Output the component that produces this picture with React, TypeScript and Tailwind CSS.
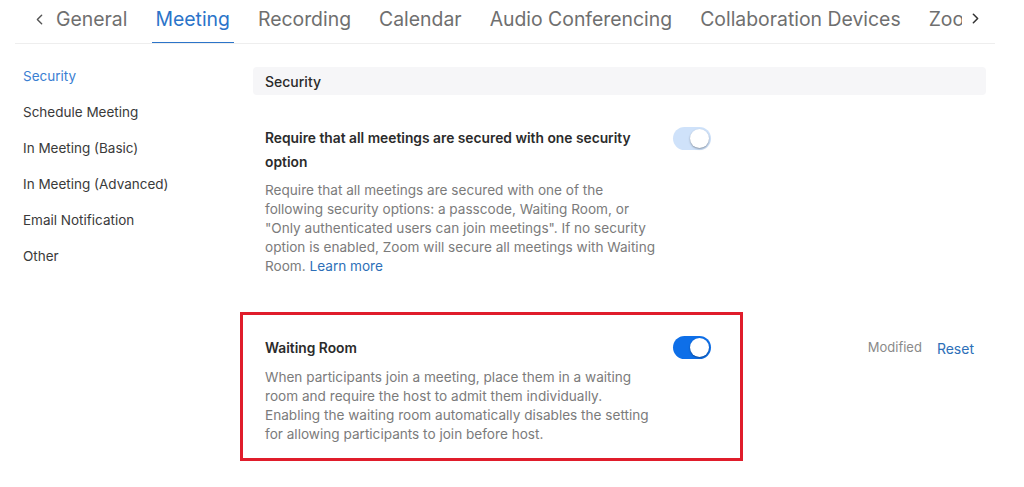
import { ChevronLeft, ChevronRight } from 'lucide-react';

const tabs = ['General', 'Meeting', 'Recording', 'Calendar', 'Audio Conferencing', 'Collaboration Devices', 'Zoom Apps'];
const sideItems = ['Security', 'Schedule Meeting', 'In Meeting (Basic)', 'In Meeting (Advanced)', 'Email Notification', 'Other'];

const Toggle = ({ on, dim }: { on: boolean; dim?: boolean }) => (
  <div
    className={`relative h-[23px] w-[38px] shrink-0 rounded-full ${dim ? 'bg-[#cfe2fa]' : on ? 'bg-[#0e6fe8]' : 'bg-gray-300'}`}
  >
    <div
      className={`absolute top-[2px] h-[19px] w-[19px] rounded-full bg-white shadow-[0_1px_2px_rgba(0,0,0,0.35)] ${on ? 'right-[2px]' : 'left-[2px]'}`}
    />
  </div>
);

const App = () => {
  return (
    <div className="h-[487px] w-[1024px] overflow-hidden bg-white font-['Inter','Liberation_Sans',sans-serif]">
      {/* top tabs */}
      <div className="ml-[15px] mr-[29px] flex h-[44px] items-stretch border-b border-[#eeeeee]">
        <div className="flex w-[41px] items-center justify-end pb-[4px] pr-[8px] text-[#555]">
          <ChevronLeft size={17} strokeWidth={2} />
        </div>
        <div className="flex w-[906px] gap-[28px] overflow-hidden">
          {tabs.map((t) => (
            <div
              key={t}
              className={`relative shrink-0 pt-[7px] text-[19.4px] leading-[24px] whitespace-nowrap ${t === 'Meeting' ? 'text-[#2b74c9]' : 'text-[#6f6f6f]'}`}
            >
              {t}
              {t === 'Meeting' && <div className="absolute -left-[3px] -right-[4px] bottom-[-1px] h-[2px] bg-[#2b74c9]" />}
            </div>
          ))}
        </div>
        <div className="flex items-center pb-[6px] pl-[5px] text-[#333]">
          <ChevronRight size={17} strokeWidth={2.2} />
        </div>
      </div>

      <div className="relative flex">
        {/* sidebar */}
        <div className="w-[253px] shrink-0 pt-[14px] pl-[23px]">
          {sideItems.map((s) => (
            <div
              key={s}
              className={`flex h-[36px] items-center text-[13.5px] ${s === 'Security' ? 'text-[#3b80d2]' : 'text-[#3a3a3a]'}`}
            >
              {s}
            </div>
          ))}
        </div>

        {/* content */}
        <div className="w-[733px] pt-[23px]">
          <div className="flex h-[28px] items-center rounded-[4px] bg-[#f6f6f8] px-[12px] text-[14px] font-medium text-[#2a2a2a]">
            Security
          </div>

          <div className="mt-[31px] flex px-[12px]">
            <div className="w-[408px]">
              <div className="w-[398px] text-[13.8px] leading-[24px] font-semibold text-[#2b2b2b]">
                Require that all meetings are secured with one security option
              </div>
              <div className="mt-[7px] w-[393px] text-[13.6px] leading-[19px] text-[#7b7b7b]">
                Require that all meetings are secured with one of the following security options: a passcode, Waiting
                Room, or "Only authenticated users can join meetings". If no security option is enabled, Zoom will
                secure all meetings with Waiting Room. <span className="text-[#2d6fb8]">Learn more</span>
              </div>
            </div>
            <div className="pt-[1px]">
              <Toggle on dim />
            </div>
          </div>

          <div className="mt-[60px] flex px-[12px]">
            <div className="w-[408px]">
              <div className="text-[13.8px] leading-[24px] font-semibold text-[#2b2b2b]">Waiting Room</div>
              <div className="mt-[8px] w-[388px] text-[13.6px] leading-[19px] text-[#7b7b7b]">
                When participants join a meeting, place them in a waiting room and require the host to admit them
                individually. Enabling the waiting room automatically disables the setting for allowing participants to
                join before host.
              </div>
            </div>
            <div>
              <Toggle on />
            </div>
            <div className="ml-auto flex h-[24px] items-center gap-[15px] pr-[0px]">
              <span className="text-[13px] text-[#8a8a8a]">Modified</span>
              <span className="text-[14px] text-[#2d6fb8]">Reset</span>
            </div>
          </div>
        </div>

        {/* annotation box */}
        <div className="pointer-events-none absolute left-[240px] top-[268px] h-[149px] w-[503px] border-[3px] border-[#e01d2b]" />
      </div>
    </div>
  );
};

export default App;
